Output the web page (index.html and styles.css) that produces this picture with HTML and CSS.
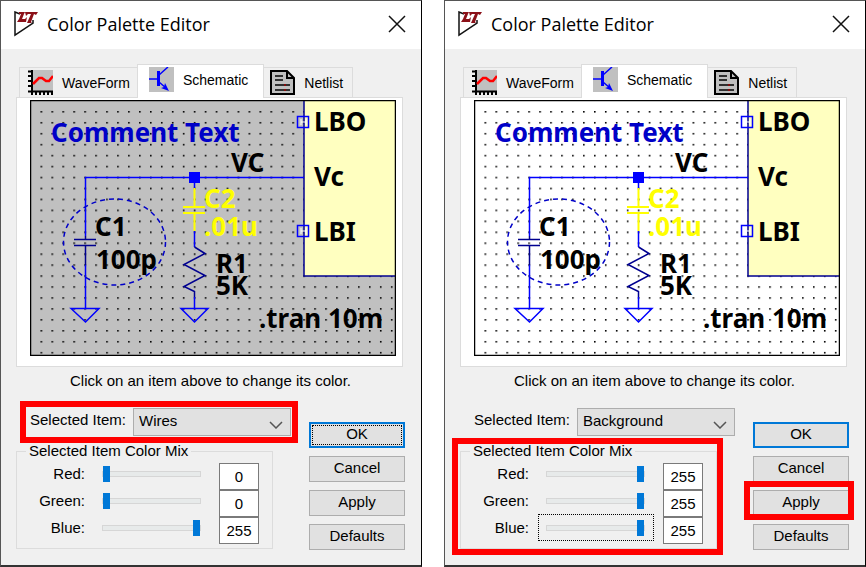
FILE: index.html
```html
<!DOCTYPE html>
<html lang="en">
<head>
    <meta charset="UTF-8">
    <meta name="viewport" content="width=device-width, initial-scale=1.0">
    <title>Color Palette Editor</title>
    <link rel="stylesheet" href="styles.css">
</head>
<body>
    <!-- Wires -->
    <section class="window">
        <header class="title-bar">
            <svg class="logo" viewBox="0 0 26 26" aria-hidden="true">
                <path d="M7 3 2 1v23l18-12V9" fill="none" stroke="#111" stroke-width="1.5"/>
                <path d="M6 1h6l-1 2-2 5h3l2-2-1 5H4l2-3 2-5H6zM12 1h13l-2 3-2-1-3 8 1 1h-5l4-9h-3l-2 2z" fill="#8b1018"/>
            </svg>
            <h1>Color Palette Editor</h1>
            <button type="button" class="close" aria-label="Close">
                <svg viewBox="0 0 18 18"><path d="M1 1l16 16M17 1L1 17" fill="none" stroke="#111" stroke-width="1.5"/></svg>
            </button>
        </header>
        <div class="body">
            <div class="tabs" role="tablist">
                <button type="button" role="tab" class="tab">
                    <svg class="tab-icon" viewBox="0 0 25 25"><path d="M3 0h22v21H3z" fill="#c0c0c0"/><path d="M4 0v25M0 21.500h25M0 1.500h4M0 6h4M0 11h4M0 16h4M8 21v4M12 21v4M16 21v4M20 21v4M24 21v4" fill="none" stroke="#000" stroke-width="2"/><path d="M5 14l6-6h3l4 3h3l4-5" fill="none" stroke="#f00" stroke-width="2.500"/></svg>
                    WaveForm
                </button>
                <button type="button" role="tab" class="tab active" aria-selected="true">
                    <svg class="tab-icon" viewBox="0 0 25 25"><path d="M0 0h25v25H0z" fill="#c0c0c0"/><path d="M0 12h9M10 8l9-8M10 15l7 6" fill="none" stroke="#00f" stroke-width="1.500"/><path d="M8 4h3v15H8zM20 24l-8-3 3-1 1-4 1 2z" fill="#00f"/></svg>
                    Schematic
                </button>
                <button type="button" role="tab" class="tab">
                    <svg class="tab-icon" viewBox="0 0 25 25"><path d="M1 1h16l7 7v16H1z" fill="#c0c0c0" stroke="#000" stroke-width="2"/><path d="M17 1v7h7" fill="none" stroke="#000" stroke-width="2"/><path d="M5 6h8M5 10h8M5 15h15M5 20h15" stroke="#000" stroke-width="1.500"/><path d="M14 15h2M14 20h2" stroke="#900" stroke-width="1.500"/></svg>
                    Netlist
                </button>
            </div>
            <div class="panel">
                <svg class="schematic" viewBox="30 100 366 256">
                    <defs>
                        <pattern id="grid-a" x="40.500" y="111" width="10.950" height="10.950" patternUnits="userSpaceOnUse"><rect width="1.600" height="1.600" fill="#000"/></pattern>
                    </defs>
                    <rect x="30" y="100" width="366" height="256" fill="#c0c0c0"/>
                    <rect x="36" y="106" width="360" height="250" fill="url(#grid-a)"/>
                    <rect class="part" x="304" y="100" width="92" height="176" fill="#ffffc0"/>
                    <g class="wire">
                        <path d="M304 177.500H85.500V236M85.500 265V308M194.500 177V188M194.500 231V247M194.500 297V308"/>
                        <path d="M71 308.500H99L85.500 322ZM181 308.500H208L194.500 322Z"/>
                        <path d="M297.500 116.500h11v11h-11zM297.500 225.500h11v11h-11z"/>
                    </g>
                    <rect x="189" y="172" width="11" height="11" fill="#00f"/>
                    <path d="M301 119v6M306 119v6M301 122h5M301 228v6M306 228v6M301 231h5" stroke="#fff" fill="none"/>
                    <path class="part" d="M85.500 236V239.500M74 239.500H96M74 245.500H96M85.500 245.500V265M194.500 247L205 253.500 184 264.500 205 275.500 184 286.500 194.500 291.500V297"/>
                    <path class="picked" d="M194.500 188V207M183 207H205M183 213H205M194.500 213V231"/>
                    <ellipse class="outline" cx="114.500" cy="242" rx="51" ry="43"/>
                    <text class="comment" x="51" y="142">Comment Text</text>
                    <text x="231" y="172">VC</text>
                    <text x="314" y="131">LBO</text>
                    <text x="314" y="186">Vc</text>
                    <text x="314" y="241">LBI</text>
                    <text class="picked-text" x="204" y="208">C2</text>
                    <text class="picked-text" x="204" y="236">.01u</text>
                    <text x="95" y="236">C1</text>
                    <text x="96" y="269">100p</text>
                    <text x="216" y="273">R1</text>
                    <text x="216" y="295">5K</text>
                    <text x="259" y="328">.tran 10m</text>
                    <rect class="frame" x="30.500" y="100.500" width="365" height="255"/>
                </svg>
            </div>
            <p class="hint">Click on an item above to change its color.</p>
            <div class="controls">
                <div class="settings">
                    <div class="item-row marked">
                        <label for="item-a">Selected Item:</label>
                        <div class="picker">
                            <select id="item-a"><option>Wires</option><option>Background</option></select>
                            <svg class="chevron" viewBox="0 0 14 8"><path d="M1 1l6 6 6-6" fill="none" stroke="#555" stroke-width="1.500"/></svg>
                        </div>
                    </div>
                    <fieldset class="mix">
                        <legend>Selected Item Color Mix</legend>
                        <label for="red-a">Red:</label>
                        <input type="range" id="red-a" min="0" max="255" value="0">
                        <input type="text" class="amount" aria-label="Red value" value="0">
                        <label for="green-a">Green:</label>
                        <input type="range" id="green-a" min="0" max="255" value="0">
                        <input type="text" class="amount" aria-label="Green value" value="0">
                        <label for="blue-a">Blue:</label>
                        <input type="range" id="blue-a" min="0" max="255" value="255">
                        <input type="text" class="amount" aria-label="Blue value" value="255">
                    </fieldset>
                </div>
                <div class="actions">
                    <button type="button" class="btn default focused">OK</button>
                    <button type="button" class="btn">Cancel</button>
                    <button type="button" class="btn">Apply</button>
                    <button type="button" class="btn">Defaults</button>
                </div>
            </div>
        </div>
    </section>

    <!-- Background -->
    <section class="window">
        <header class="title-bar">
            <svg class="logo" viewBox="0 0 26 26" aria-hidden="true">
                <path d="M7 3 2 1v23l18-12V9" fill="none" stroke="#111" stroke-width="1.5"/>
                <path d="M6 1h6l-1 2-2 5h3l2-2-1 5H4l2-3 2-5H6zM12 1h13l-2 3-2-1-3 8 1 1h-5l4-9h-3l-2 2z" fill="#8b1018"/>
            </svg>
            <h1>Color Palette Editor</h1>
            <button type="button" class="close" aria-label="Close">
                <svg viewBox="0 0 18 18"><path d="M1 1l16 16M17 1L1 17" fill="none" stroke="#111" stroke-width="1.5"/></svg>
            </button>
        </header>
        <div class="body">
            <div class="tabs" role="tablist">
                <button type="button" role="tab" class="tab">
                    <svg class="tab-icon" viewBox="0 0 25 25"><path d="M3 0h22v21H3z" fill="#c0c0c0"/><path d="M4 0v25M0 21.500h25M0 1.500h4M0 6h4M0 11h4M0 16h4M8 21v4M12 21v4M16 21v4M20 21v4M24 21v4" fill="none" stroke="#000" stroke-width="2"/><path d="M5 14l6-6h3l4 3h3l4-5" fill="none" stroke="#f00" stroke-width="2.500"/></svg>
                    WaveForm
                </button>
                <button type="button" role="tab" class="tab active" aria-selected="true">
                    <svg class="tab-icon" viewBox="0 0 25 25"><path d="M0 0h25v25H0z" fill="#c0c0c0"/><path d="M0 12h9M10 8l9-8M10 15l7 6" fill="none" stroke="#00f" stroke-width="1.500"/><path d="M8 4h3v15H8zM20 24l-8-3 3-1 1-4 1 2z" fill="#00f"/></svg>
                    Schematic
                </button>
                <button type="button" role="tab" class="tab">
                    <svg class="tab-icon" viewBox="0 0 25 25"><path d="M1 1h16l7 7v16H1z" fill="#c0c0c0" stroke="#000" stroke-width="2"/><path d="M17 1v7h7" fill="none" stroke="#000" stroke-width="2"/><path d="M5 6h8M5 10h8M5 15h15M5 20h15" stroke="#000" stroke-width="1.500"/><path d="M14 15h2M14 20h2" stroke="#900" stroke-width="1.500"/></svg>
                    Netlist
                </button>
            </div>
            <div class="panel">
                <svg class="schematic" viewBox="30 100 366 256">
                    <defs>
                        <pattern id="grid-b" x="40.500" y="111" width="10.950" height="10.950" patternUnits="userSpaceOnUse"><rect width="1.600" height="1.600" fill="#000"/></pattern>
                    </defs>
                    <rect x="30" y="100" width="366" height="256" fill="#fff"/>
                    <rect x="36" y="106" width="360" height="250" fill="url(#grid-b)"/>
                    <rect class="part" x="304" y="100" width="92" height="176" fill="#ffffc0"/>
                    <g class="wire">
                        <path d="M304 177.500H85.500V236M85.500 265V308M194.500 177V188M194.500 231V247M194.500 297V308"/>
                        <path d="M71 308.500H99L85.500 322ZM181 308.500H208L194.500 322Z"/>
                        <path d="M297.500 116.500h11v11h-11zM297.500 225.500h11v11h-11z"/>
                    </g>
                    <rect x="189" y="172" width="11" height="11" fill="#00f"/>
                    <path d="M301 119v6M306 119v6M301 122h5M301 228v6M306 228v6M301 231h5" stroke="#fff" fill="none"/>
                    <path class="part" d="M85.500 236V239.500M74 239.500H96M74 245.500H96M85.500 245.500V265M194.500 247L205 253.500 184 264.500 205 275.500 184 286.500 194.500 291.500V297"/>
                    <path class="picked" d="M194.500 188V207M183 207H205M183 213H205M194.500 213V231"/>
                    <ellipse class="outline" cx="114.500" cy="242" rx="51" ry="43"/>
                    <text class="comment" x="51" y="142">Comment Text</text>
                    <text x="231" y="172">VC</text>
                    <text x="314" y="131">LBO</text>
                    <text x="314" y="186">Vc</text>
                    <text x="314" y="241">LBI</text>
                    <text class="picked-text" x="204" y="208">C2</text>
                    <text class="picked-text" x="204" y="236">.01u</text>
                    <text x="95" y="236">C1</text>
                    <text x="96" y="269">100p</text>
                    <text x="216" y="273">R1</text>
                    <text x="216" y="295">5K</text>
                    <text x="259" y="328">.tran 10m</text>
                    <rect class="frame" x="30.500" y="100.500" width="365" height="255"/>
                </svg>
            </div>
            <p class="hint">Click on an item above to change its color.</p>
            <div class="controls">
                <div class="settings">
                    <div class="item-row">
                        <label for="item-b">Selected Item:</label>
                        <div class="picker">
                            <select id="item-b"><option>Background</option><option>Wires</option></select>
                            <svg class="chevron" viewBox="0 0 14 8"><path d="M1 1l6 6 6-6" fill="none" stroke="#555" stroke-width="1.500"/></svg>
                        </div>
                    </div>
                    <fieldset class="mix marked">
                        <legend>Selected Item Color Mix</legend>
                        <label for="red-b">Red:</label>
                        <input type="range" id="red-b" min="0" max="255" value="255">
                        <input type="text" class="amount" aria-label="Red value" value="255">
                        <label for="green-b">Green:</label>
                        <input type="range" id="green-b" min="0" max="255" value="255">
                        <input type="text" class="amount" aria-label="Green value" value="255">
                        <label for="blue-b">Blue:</label>
                        <input type="range" id="blue-b" class="focused" min="0" max="255" value="255">
                        <input type="text" class="amount" aria-label="Blue value" value="255">
                    </fieldset>
                </div>
                <div class="actions">
                    <button type="button" class="btn default">OK</button>
                    <button type="button" class="btn">Cancel</button>
                    <button type="button" class="btn marked">Apply</button>
                    <button type="button" class="btn">Defaults</button>
                </div>
            </div>
        </div>
    </section>
</body>
</html>
```
FILE: styles.css
```css
:root {
    --face: #f0f0f0;
    --line: #dcdcdc;
    --button: #e1e1e1;
    --accent: #0078d7;
    --mark: #ff0000;
}
* {
    margin: 0;
    padding: 0;
    box-sizing: border-box;
}
body {
    display: flex;
    align-items: flex-start;
    gap: 22px;
    background: #fff;
    color: #000;
    font: 15px/16px "Liberation Sans", Arial, sans-serif;
}
button, input, select {
    font: inherit;
    color: inherit;
}
.window {
    flex: 1;
    background: var(--face);
    border: 1px solid #555;
    border-right-color: #000;
    border-bottom: 2px solid #333;
}
.title-bar {
    display: flex;
    align-items: center;
    height: 48px;
    padding: 0 15px 2px 12px;
    background: #fff;
}
.logo {
    width: 26px;
    height: 26px;
}
.title-bar h1 {
    flex: 1;
    padding-left: 8px;
    font: 18px/24px "Open Sans", sans-serif;
}
.close {
    display: flex;
    border: none;
    background: none;
}
.close svg {
    width: 18px;
    height: 18px;
}
.body {
    padding: 15px 16px 15px 15px;
}
.tabs {
    display: flex;
    align-items: flex-end;
    padding-left: 3px;
}
.tab {
    display: flex;
    align-items: center;
    gap: 9px;
    height: 30px;
    padding: 0 7px 0 8px;
    border: 1px solid var(--line);
    border-bottom: none;
    background: var(--face);
    font-size: 14px;
}
.tab:last-child {
    padding: 0 9px 0 6px;
}
.tab.active {
    height: 34px;
    margin: 0 -1px -1px;
    padding: 0 15px 4px 11px;
    background: #fff;
    position: relative;
}
.tab-icon {
    width: 25px;
    height: 25px;
}
.panel {
    margin-right: 2px;
    padding: 2px 6px 10px 13px;
    border: 1px solid var(--line);
    background: #fff;
}
.schematic {
    display: block;
    width: 100%;
}
.schematic text {
    font: bold 26px "Noto Sans", sans-serif;
}
.schematic .comment {
    fill: #0000c8;
}
.schematic .picked-text {
    fill: #ff0;
}
.wire {
    fill: none;
    stroke: #00f;
    stroke-width: 1.5;
}
.part {
    stroke: #000090;
    stroke-width: 1.5;
}
path.part {
    fill: none;
}
.picked {
    fill: none;
    stroke: #ff0;
    stroke-width: 2;
}
.outline {
    fill: none;
    stroke: #0000c8;
    stroke-width: 1.5;
    stroke-dasharray: 5 4;
}
.frame {
    fill: none;
    stroke: #000;
    stroke-width: 1.5;
}
.hint {
    padding: 6px 0 8px;
    text-align: center;
}
.controls {
    display: flex;
    gap: 18px;
}
.settings {
    flex: 1;
    padding-top: 11px;
}
.item-row {
    display: flex;
    margin-left: 14px;
    position: relative;
}
.item-row label {
    width: 103px;
    padding-top: 4px;
}
.picker {
    flex: 1;
    position: relative;
}
.picker select {
    display: block;
    width: 100%;
    height: 28px;
    padding: 0 5px 2px;
    border: 1px solid #adadad;
    background: var(--button);
    appearance: none;
}
.chevron {
    position: absolute;
    right: 8px;
    top: 13px;
    width: 14px;
    height: 8px;
    pointer-events: none;
}
.mix {
    display: grid;
    grid-template-columns: 68px 1fr 40px;
    grid-auto-rows: 27px;
    column-gap: 9px;
    margin: 7px 18px 0 0;
    padding: 1px 13px 7px 0;
    border: 1px solid var(--line);
    position: relative;
}
.mix legend {
    margin-left: 9px;
    padding: 0 3px;
}
.mix label {
    line-height: 27px;
    text-align: right;
}
.mix input[type="range"] {
    width: 100%;
    height: 27px;
    padding: 0 8px 0 7px;
    background: none;
    border: 1px dotted transparent;
    appearance: none;
}
.mix input[type="range"].focused {
    border-color: #000;
}
.mix input::-webkit-slider-runnable-track {
    height: 6px;
    border: 1px solid #d6d6d6;
    background: #e7eaea;
}
.mix input::-webkit-slider-thumb {
    width: 7px;
    height: 16px;
    margin-top: -6px;
    background: var(--accent);
    appearance: none;
}
.amount {
    width: 40px;
    height: 27px;
    margin-top: 3px;
    border: 1px solid #7a7a7a;
    background: #fff;
    text-align: center;
}
.actions {
    display: flex;
    flex-direction: column;
    gap: 8px;
    width: 96px;
    padding-top: 25px;
}
.btn {
    height: 26px;
    padding-bottom: 2px;
    border: 1px solid #adadad;
    background: var(--button);
    position: relative;
}
.btn.default {
    border: 2px solid var(--accent);
}
.btn.focused {
    outline: 1px dotted #000;
    outline-offset: -4px;
}
/* red callout boxes */
.marked::after {
    content: '';
    position: absolute;
    inset: -7px;
    border: 6px solid var(--mark);
    pointer-events: none;
}
.item-row.marked::after {
    left: -10px;
}
.mix.marked::after {
    inset: -21px -7px -7px -9px;
}
.btn.marked::after {
    inset: -10px -6px -5px -10px;
}
.btn.marked {
    z-index: 1;
}
```
